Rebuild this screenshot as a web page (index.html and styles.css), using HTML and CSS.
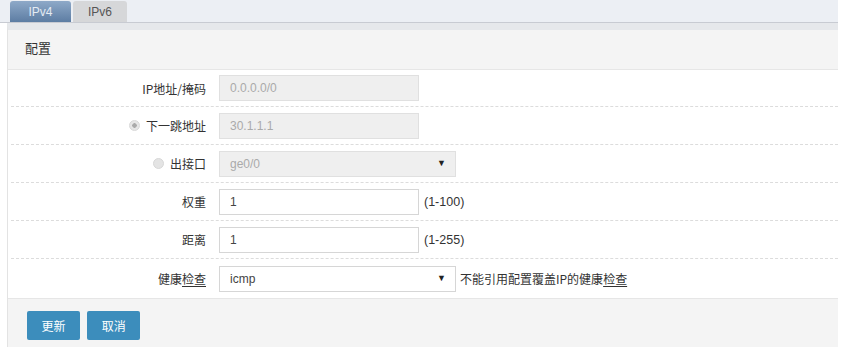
FILE: index.html
```
<!DOCTYPE html>
<html lang="zh-CN">

<head>
    <meta charset="UTF-8">
    <title>静态路由</title>
    <link rel="stylesheet" href="styles.css">
</head>

<body>
    <div class="page">
        <div class="tabs">
            <a class="tab active" href="#">IPv4</a>
            <a class="tab" href="#">IPv6</a>
        </div>

        <div class="panel">
            <div class="panel-head">配置</div>

            <div class="panel-body">
                <div class="row">
                    <label class="label">IP地址/掩码</label>
                    <div class="field"><span class="input disabled">0.0.0.0/0</span></div>
                </div>
                <div class="row">
                    <label class="label"><span class="radio checked"></span>下一跳地址</label>
                    <div class="field"><span class="input disabled">30.1.1.1</span></div>
                </div>
                <div class="row">
                    <label class="label"><span class="radio"></span>出接口</label>
                    <div class="field"><span class="select disabled">ge0/0<i class="arrow">▼</i></span></div>
                </div>
                <div class="row">
                    <label class="label">权重</label>
                    <div class="field"><span class="input">1</span><span class="hint">(1-100)</span></div>
                </div>
                <div class="row">
                    <label class="label">距离</label>
                    <div class="field"><span class="input">1</span><span class="hint">(1-255)</span></div>
                </div>
                <div class="row last">
                    <label class="label">健康<u>检查</u></label>
                    <div class="field"><span class="select">icmp<i class="arrow">▼</i></span><span class="note">不能引用配置覆盖IP的健康<u>检查</u></span></div>
                </div>
            </div>

            <div class="panel-foot">
                <button class="btn">更新</button>
                <button class="btn">取消</button>
            </div>
        </div>
    </div>
</body>

</html>
```

FILE: styles.css
```
body {
    margin: 0;
    background: #fff;
    font-family: 'Liberation Sans', 'Noto Sans CJK SC', sans-serif;
    font-size: 12px;
    color: #333;
    overflow: hidden;
}

.page {
    width: 838px;
}

.tabs {
    display: flex;
    align-items: flex-end;
    height: 22px;
    padding-left: 10px;
    background: #eceff4;
    border-bottom: 1px solid #c8cbd2;
}

.tab {
    display: block;
    box-sizing: border-box;
    width: 54px;
    height: 21px;
    line-height: 22px;
    margin-right: 0;
    border-radius: 3px 3px 0 0;
    background: #d6d7d9;
    color: #555;
    text-align: center;
    text-decoration: none;
    font-size: 12px;
}

.tab.active {
    width: 61px;
    margin-right: 2px;
    background: linear-gradient(#8ea9c8, #5d7da3);
    color: #e4ebf3;
}

.panel {
    margin-left: 7px;
    border-top: 7px solid #e6e8eb;
    border-left: 1px solid #e3e3e3;
}

.panel-head {
    height: 39px;
    line-height: 38px;
    padding-left: 17px;
    background: #f4f4f4;
    border-bottom: 1px solid #e6e6e6;
    font-size: 13px;
    color: #333;
}

.panel-body {
    padding: 0 0 0 3px;
}

.row {
    display: flex;
    align-items: center;
    height: 37px;
    border-bottom: 1px dashed #dcdcdc;
}

.row:first-child {
    height: 36px;
    padding-top: 0;
}

.row.last {
    border-bottom: none;
    height: 39px;
}

.label {
    display: flex;
    align-items: center;
    justify-content: flex-end;
    width: 195px;
    padding-right: 13px;
    font-family: 'Noto Sans CJK SC', sans-serif;
    font-size: 12px;
    color: #333;
}

.label u,
.note u {
    text-decoration: underline;
    text-underline-offset: 2px;
}

.field {
    display: flex;
    align-items: center;
}

.input,
.select {
    display: flex;
    align-items: center;
    box-sizing: border-box;
    width: 200px;
    height: 26px;
    padding-left: 10px;
    border: 1px solid #d6d6d6;
    background: #fff;
    color: #444;
    font-size: 12px;
}

.select {
    position: relative;
    width: 237px;
}

.input.disabled,
.select.disabled {
    background: #efefef;
    color: #aaa;
    border-color: #e0e0e0;
}

.arrow {
    position: absolute;
    right: 9px;
    top: 6px;
    font-style: normal;
    font-size: 9px;
    color: #222;
}

.hint {
    margin-left: 5px;
    font-size: 12.5px;
    color: #333;
}

.note {
    margin-left: 4px;
    font-family: 'Noto Sans CJK SC', sans-serif;
    color: #333;
}

.radio {
    display: inline-block;
    box-sizing: border-box;
    width: 11px;
    height: 11px;
    margin-right: 6px;
    border-radius: 50%;
    background: #e4e4e4;
    border: 1px solid #d8d8d8;
}

.radio.checked {
    background: radial-gradient(circle, #aaa 0 2px, #e6e6e6 2.5px);
}

.panel-foot {
    height: 49px;
    padding: 12px 0 0 19px;
    box-sizing: border-box;
    background: #f4f4f4;
    border-top: 1px solid #e6e6e6;
}

.btn {
    width: 53px;
    height: 29px;
    margin-right: 4px;
    border: none;
    border-radius: 2px;
    background: #3c8dbc;
    color: #fff;
    font-family: 'Noto Sans CJK SC', sans-serif;
    font-size: 12px;
}
```
